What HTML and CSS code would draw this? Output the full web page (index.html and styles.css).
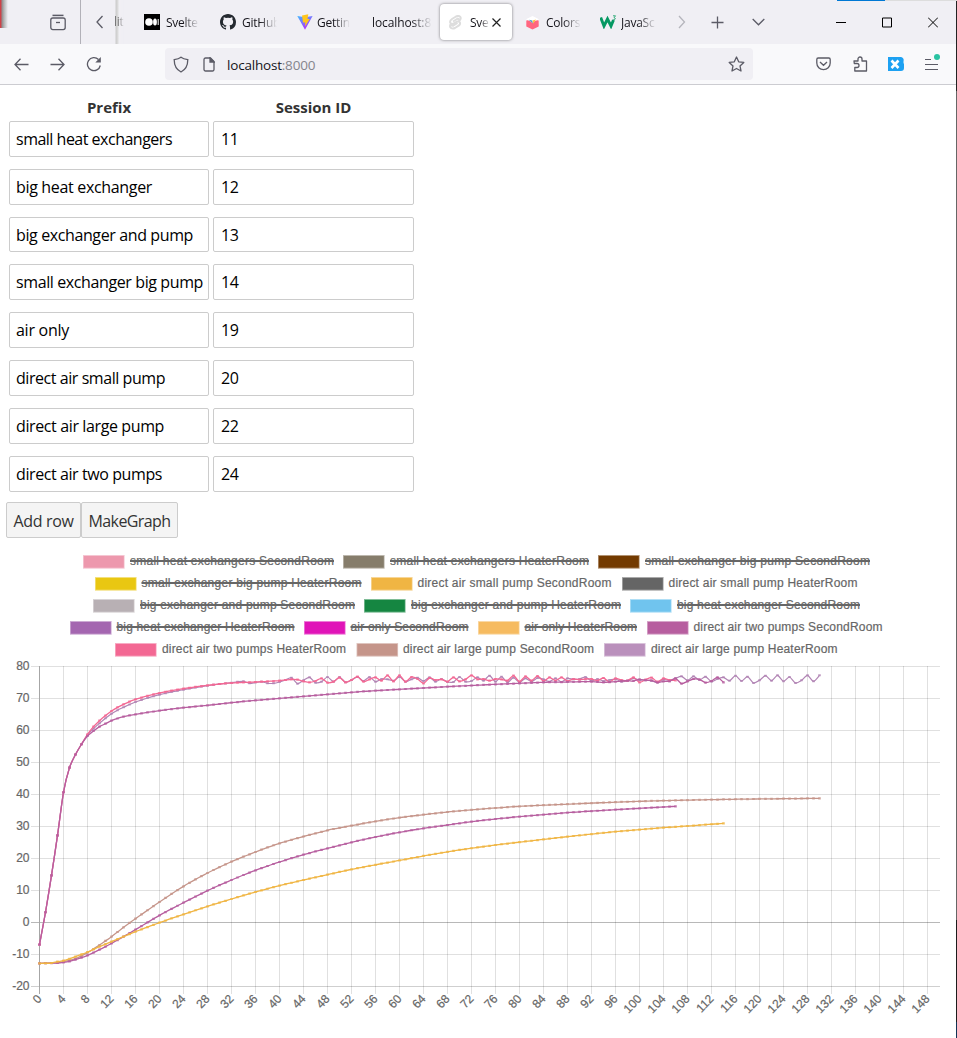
FILE: index.html
```html
<!DOCTYPE html>
<html lang="en">
<head>
<meta charset="utf-8">
<title>Svelte app</title>
<link rel="stylesheet" href="styles.css">
</head>
<body>
<div class="window">
  <header class="tabs">
    <div class="sliver"></div>
    <svg class="ic" width="16" height="17" viewBox="0 0 16 17"><path d="M2.500 1.400h11" stroke-width="1.500"/><rect x=".8" y="4" width="14.4" height="11.6" rx="2"/><path d="M6 8.500h4"/></svg>
    <div class="divider"></div>
    <svg class="ic" width="8" height="14" viewBox="0 0 8 14"><path d="M6.500 1L1 7l5.500 6"/></svg>
    <div class="partial fade">lit</div>
    <svg width="16" height="16" viewBox="0 0 16 16"><path d="M0 0h16v16H0z"/><circle cx="5" cy="8" r="3.800" fill="#fff"/><ellipse cx="11" cy="8" rx="1.900" ry="3.600" fill="#fff"/><path d="M14.200 5v6" stroke="#fff"/></svg>
    <div class="label fade w32">Svelte</div>
    <svg width="16" height="16" viewBox="0 0 16 16"><path fill="#24292f" d="M8 0C3.580 0 0 3.580 0 8c0 3.540 2.290 6.530 5.470 7.590.4.070.55-.17.55-.38v-1.500c-2.010.37-2.530-.49-2.690-.94-.09-.23-.48-.94-.82-1.130-.28-.15-.68-.52-.01-.53.63-.01 1.080.58 1.230.82.72 1.210 1.870.87 2.330.66.07-.52.28-.87.51-1.070-1.780-.2-3.640-.89-3.640-3.950 0-.87.31-1.590.82-2.150-.08-.2-.36-1.020.08-2.120 0 0 .67-.21 2.200.82a7.400 7.400 0 0 1 4 0c1.530-1.040 2.200-.82 2.200-.82.44 1.100.16 1.920.08 2.120.51.56.82 1.270.82 2.150 0 3.070-1.870 3.750-3.650 3.950.29.25.54.73.54 1.480v2.200c0 .21.15.46.55.38A8 8 0 0 0 16 8c0-4.420-3.580-8-8-8z"/></svg>
    <div class="label fade w34">GitHub</div>
    <svg width="16" height="16" viewBox="0 0 16 16"><defs><linearGradient id="v" x1="0" y1="0" x2=".6" y2="1"><stop stop-color="#41b8ff"/><stop offset="1" stop-color="#b72cfe"/></linearGradient></defs><path fill="url(#v)" d="M.3 2L8 3.200 15.600 2 8 15.700z"/><path fill="#ffc61c" d="M5 1.500L11.300.3 10.500 5h2.200L8 12.500l.3-4H6z"/></svg>
    <div class="label fade w32">Gettin</div>
    <div class="label fade w56">localhost:8</div>
    <div class="active">
      <svg width="13" height="15" viewBox="0 0 13 15" fill="none" stroke="#ddd" stroke-width="2"><path d="M4 6.500l4-2.500c2-1 1.500 1.500 3 1 2-3-1-5-4-3.500L3 4C-.5 6.500 1.500 9.500 4 8.800l4-2.200c3-1 4 2 2 3.800L6 13c-3 1.500-6-.5-4.500-3.500 1.500-.5 1 2 3 1l4-2.500"/></svg>
      <div class="label fade w18">Sve</div>
      <svg class="close" width="9" height="9" viewBox="0 0 9 9"><path d="M.5.5l8 8M8.500.5l-8 8" stroke="#222" stroke-width="1.200"/></svg>
    </div>
    <svg width="13" height="15" viewBox="0 0 13 15"><path fill="#fff" d="M6.500 1l6 3v5h-12V4z"/><path fill="#ff6680" d="M.3 5.500q3-1 6.200 2.500 3-3.500 6.200-2.500v6L6.500 14.600.3 11.500z"/><path fill="#38a0d8" d="M2.800 4.800l3.400.7.8 3z"/><path fill="#ffc43d" d="M6.500 5.500l3.500-1-3 4.200z"/></svg>
    <div class="label fade w34">Colors</div>
    <svg width="17" height="14" viewBox="0 0 17 14"><path d="M.7 2.500L4 11l3.500-7L11 11l2.500-6" fill="none" stroke="#059862" stroke-width="2.900"/><path d="M13 .8h2.500l-1.500 2c2 0 2 2-.8 2" fill="none" stroke="#30aa78"/></svg>
    <div class="label fade w34">JavaSc</div>
    <svg class="ic pale" width="8" height="14" viewBox="0 0 8 14"><path d="M1 1l5.500 6L1 13"/></svg>
    <svg class="ic" width="13" height="13" viewBox="0 0 13 13"><path d="M6.500 .5v12M.5 6.500h12"/></svg>
    <svg class="ic" width="13" height="8" viewBox="0 0 13 8"><path d="M.7 1l5.800 5.800L12.300 1"/></svg>
    <svg width="10" height="11"><path d="M0 5.500h10" stroke="#000"/></svg>
    <svg width="10" height="11"><path d="M.5 1h9v9h-9z" fill="none" stroke="#000"/></svg>
    <svg width="10" height="11"><path d="M0 .5l10 10M10 .5l-10 10" stroke="#000"/></svg>
    <div class="topline"></div>
  </header>

  <nav class="toolbar">
    <svg class="ic" width="15" height="13" viewBox="0 0 15 13"><path d="M14.500 6.500H1M6.500 .8L1 6.500l5.500 5.700"/></svg>
    <svg class="ic" width="15" height="13" viewBox="0 0 15 13"><path d="M.5 6.500H14M8.500 .8L14 6.500l-5.500 5.700"/></svg>
    <svg class="ic" width="16" height="16" viewBox="0 0 16 16"><path d="M14.300 9.500A6.500 6.500 0 1 1 12.500 3.500"/><path d="M14.800 1v5.500H9.300z" fill="#5b5b66" stroke="none"/></svg>
    <div class="urlbar">
      <svg class="ic" width="16" height="17" viewBox="0 0 16 17"><path d="M8 1.200C6 2.800 3.500 3.300 1.200 3.600c0 6 1.300 9.800 6.800 12.400 5.500-2.600 6.800-6.400 6.800-12.400C12.500 3.300 10 2.800 8 1.200z"/></svg>
      <svg class="ic" width="12" height="15" viewBox="0 0 12 15"><path d="M2.500 1h5L11 4.500v8A1.500 1.500 0 0 1 9.500 14h-7A1.500 1.500 0 0 1 1 12.500v-10A1.500 1.500 0 0 1 2.500 1z"/><path d="M7 1l4 4H7z" fill="#5b5b66"/></svg>
      <div class="url">localhost<span>:8000</span></div>
      <svg class="ic" width="17" height="16" viewBox="0 0 17 16"><path stroke-linejoin="round" d="M8.500 1l2.200 4.800 5.100.6-3.800 3.500 1 5.100-4.500-2.500L4 15l1-5.100L1.200 6.400l5.100-.6z"/></svg>
    </div>
    <svg class="ic" width="15" height="14" viewBox="0 0 15 14"><path d="M2.200 1h10.600A1.500 1.500 0 0 1 14.200 2.500V6A6.700 6.700 0 0 1 .8 6V2.500A1.500 1.500 0 0 1 2.200 1zM4 5l3.500 3.300L11 5"/></svg>
    <svg class="ic" width="15" height="16" viewBox="0 0 15 16"><path stroke-linejoin="round" d="M1 5h4V3a2 2 0 0 1 4 0v2h4.500v10H1.800v-3.500H4a2 2 0 0 0 0-4H1.300z"/></svg>
    <svg width="16" height="14" viewBox="0 0 16 14"><path fill="#1da1f2" d="M0 0h13a3 3 0 0 1 2.500 4v2l.5 1v4a3 3 0 0 1-3 3H0z"/><path d="M3.500 3.500l7 7.500M10.500 3.500l-7 7.500" stroke="#fff" stroke-width="2.600"/></svg>
    <div class="menu"><i></i><i></i><i></i></div>
  </nav>

  <main>
    <div class="form" id="form"><b>Prefix</b><b>Session ID</b></div>
    <div class="buttons"><button><span>Add row</span></button><button><span>MakeGraph</span></button></div>
    <svg class="chart" id="chart" width="956" height="492" viewBox="0 546 956 492"></svg>
  </main>
  <div class="edge"></div>
</div>
<script src="chart.js"></script>
</body>
</html>
```
FILE: styles.css
```css
* { box-sizing: border-box; }
body { margin: 0; background: #fff; font-family: "Open Sans", "Noto Sans", sans-serif; }
.window { position: relative; width: 957px; height: 1038px; overflow: hidden; }
.tabs {
  position: relative; height: 44px; background: #f0eff4; display: grid; align-items: center;
  grid-template-columns: 50px 30px 16px 18px 30px 22px 54px 22px 55px 20px 55px 68px 86px 20px 54px 21px 57px 33px 41px 84px 46px 46px 29px;
}
.tabs svg { display: block; }
.tabs .sliver { width: 8px; height: 28px; align-self: start; background: linear-gradient(90deg, #d43b43 0, #c9474d 1px, #8f8f8f 2px, #b5b5b5 4px, #f0eff4 8px); }
.divider { width: 1px; height: 44px; background: #b2b1b8; }
.ic { fill: none; stroke: #5b5b66; stroke-width: 1.3; }
.pale { stroke: #b5b5bc; }
.label, .partial { font-size: 12px; letter-spacing: -.25px; color: #15141a; white-space: nowrap; line-height: 20px; padding-top: 1px; }
.fade { -webkit-mask-image: linear-gradient(90deg, #000 50%, transparent); mask-image: linear-gradient(90deg, #000 50%, transparent); }
.partial { width: 10px; height: 44px; padding-top: 12px; color: #777; background: linear-gradient(90deg, #f0eff4 1px, #ccc 2px, #ddd 4px, #f0eff4 5px); }
.w18 { width: 20px; } .w32 { width: 33px; } .w34 { width: 35px; } .w56 { width: 60px; letter-spacing: -.1px; }
.w56.fade { -webkit-mask-image: linear-gradient(90deg, #000 65%, transparent); mask-image: linear-gradient(90deg, #000 65%, transparent); }
.active { width: 72px; height: 36px; display: flex; align-items: center; padding-left: 9px; background: #fff; border-radius: 4px; box-shadow: 0 0 3px rgba(0,0,0,.5); }
.active .label { margin-left: 8px; }
.active .close { margin-left: 2px; }
.topline { position: absolute; left: 837px; right: 0; top: 0; height: 1px; background: linear-gradient(90deg, #0078d4 48px, #ddd 48px); }
.toolbar {
  height: 41px; background: #f9f9fb; border-bottom: 1px solid #ccccd1; display: grid; align-items: center;
  grid-template-columns: 36px 36px 79px 651px 37px 35px 37px 31px; padding-left: 14px;
}
.toolbar > svg { display: block; }
.urlbar { width: 588px; height: 32px; display: flex; align-items: center; background: #f0eff4; border-radius: 4px; padding: 0 8px; }
.urlbar svg:nth-child(2) { margin: 0 12px 0 14px; }
.url { flex: 1; font-size: 13.5px; letter-spacing: -.2px; color: #15141a; padding-top: 1px; }
.url span { color: #85858c; }
.menu { position: relative; width: 13px; display: grid; gap: 4px; }
.menu i { height: 1px; background: #5b5b66; }
.menu i:first-child { width: 6px; }
.menu::after { content: ""; position: absolute; right: -2px; top: -5px; width: 6px; height: 6px; border-radius: 50%; background: #2ac3a2; }
.form { display: grid; grid-template-columns: 200px 201px; column-gap: 4px; row-gap: 12px; padding: 12px 0 0 9px; }
.form b { height: 24px; margin-bottom: -12px; line-height: 21px; text-align: center; font-size: 15px; color: #333; }
.field { height: 35.83px; border: 1px solid #ccc; border-radius: 2px; padding: 0 6px; line-height: 35px; font-size: 16px; color: #000; white-space: nowrap; }
.field:nth-child(even) { padding-left: 7px; }
.buttons { display: flex; margin: 10px 0 0 6px; }
.buttons button { height: 36px; padding: 2px 0 0; width: 75px; font: 16px "Open Sans", sans-serif; color: #333; background: #f4f4f4; border: 1px solid #ccc; border-radius: 2px; }
.buttons button + button { width: 97px; }
.chart { display: block; margin-top: 8px; font: 12px "Liberation Sans", Arial, sans-serif; }
.chart text { fill: #666; stroke: #666; stroke-width: .2px; }
.edge { position: absolute; right: 0; top: 1px; width: 1px; bottom: 0; background: linear-gradient(#222 90px, #666 90px, #666 919px, #1c1c1c 919px, #1c1c1c 1021px, #123456 1021px); }
```
FILE: chart.js
```js
const NS = 'http://www.w3.org/2000/svg';
const chart = document.getElementById('chart');
function add(tag, attrs, text) {
  const e = document.createElementNS(NS, tag);
  for (const k in attrs) e.setAttribute(k, attrs[k]);
  if (text !== undefined) e.textContent = text;
  chart.appendChild(e);
}

// Session rows: prefix, id, width of the prefix text
const rows = [['small heat exchangers', 11, 156], ['big heat exchanger', 12, 136], ['big exchanger and pump', 13, 177],
  ['small exchanger big pump', 14, 187], ['air only', 19, 53], ['direct air small pump', 20, 149],
  ['direct air large pump', 22, 148], ['direct air two pumps', 24, 146]];

// Tighten or loosen tracking so that a label fills the given width
function fit(el, width) {
  const r = document.createRange();
  r.selectNodeContents(el);
  const w = r.getBoundingClientRect().width;
  el.style.letterSpacing = ((width - w) / el.textContent.length).toFixed(3) + 'px';
}
const form = document.getElementById('form');
for (const [name, id, w] of rows) {
  for (const t of [name, id]) {
    const d = document.createElement('div');
    d.className = 'field';
    d.textContent = t;
    form.appendChild(d);
    fit(d, t === name ? w : 17.5);
  }
}
document.querySelectorAll('.buttons span').forEach((s, i) => fit(s, [60, 82][i]));

// Legend entries: box x, text x, text end, colour, hidden, label
const legend = [
  [[83,130,334,'#ed98ad',1,'small heat exchangers SecondRoom'],[343,390,589,'#867d6b',1,'small heat exchangers HeaterRoom'],[598,645,870,'#733a00',1,'small exchanger big pump SecondRoom']],
  [[95,141.5,361.5,'#e9c712',1,'small exchanger big pump HeaterRoom'],[371,417.5,611.5,'#f0b543',0,'direct air small pump SecondRoom'],[622,668.5,857.5,'#656565',0,'direct air small pump HeaterRoom']],
  [[93,140,355,'#b8b0b4',1,'big exchanger and pump SecondRoom'],[364,411,621,'#158641',1,'big exchanger and pump HeaterRoom'],[630,677,860,'#70c4ee',1,'big heat exchanger SecondRoom']],
  [[70,116.5,294.5,'#a466b0',1,'big heat exchanger HeaterRoom'],[304,350.5,468.5,'#e014b8',1,'air only SecondRoom'],[478,524.5,637,'#f6bb60',1,'air only HeaterRoom'],[647,693.5,882.5,'#b75e9f',0,'direct air two pumps SecondRoom']],
  [[115,162,346,'#f36893',0,'direct air two pumps HeaterRoom'],[356.5,403,594,'#c5958a',0,'direct air large pump SecondRoom'],[604,651,837.5,'#ba90bc',0,'direct air large pump HeaterRoom']]
];
legend.forEach((line, r) => line.forEach(([bx, tx, te, color, off, label]) => {
  const y = 555 + 22 * r;
  add('rect', {x: bx, y, width: 41.6, height: 13.7, fill: color, opacity: .55});
  add('rect', {x: bx + .8, y: y + 1, width: 40, height: 11.7, fill: color});
  add('text', {x: tx, y: y + 10, textLength: te - tx}, label);
  if (off) add('path', {d: `M${tx} ${y + 6}H${te}`, stroke: '#666', 'stroke-width': 1.9});
}));

const X = i => 39.5 + 6 * i, Y = v => 922.5 - 3.2 * v;
for (let v = -20; v <= 80; v += 10) {
  add('path', {d: `M31 ${Y(v)}H940`, stroke: v === 0 ? '#b8b8b8' : v === -20 ? '#cfcfcf' : '#000', 'stroke-opacity': v === 0 || v === -20 ? 1 : .12});
  add('text', {x: 29.500, y: Y(v) + 3.5, 'text-anchor': 'end'}, v);
}
for (let i = 0; i < 150; i += 4) {
  add('path', {d: `M${X(i)} 666V994`, stroke: i ? '#000' : '#aaa', 'stroke-opacity': i ? .12 : 1});
  add('text', {x: X(i) + 3, y: 999.500, 'text-anchor': 'end', transform: `rotate(-46 ${X(i) + 3} 999.5)`}, i);
}
add('path', {d: 'M39.5 666V987', stroke: '#a6a6a6'});

// Smooth interpolation over irregularly spaced knots
function sample(k) {
  const out = [], n = k.length;
  const m = k.map((p, j) => {
    const a = k[Math.max(0, j - 1)], b = k[Math.min(n - 1, j + 1)];
    return (b[1] - a[1]) / (b[0] - a[0]);
  });
  for (let j = 0; j < n - 1; j++) {
    const [x0, y0] = k[j], [x1, y1] = k[j + 1], h = x1 - x0;
    for (let x = x0; x < x1; x++) {
      const t = (x - x0) / h, t2 = t * t, t3 = t2 * t;
      out.push([x, (2*t3-3*t2+1)*y0 + (t3-2*t2+t)*h*m[j] + (3*t2-2*t3)*y1 + (t3-t2)*h*m[j+1]]);
    }
  }
  out.push(k[n - 1]);
  return out;
}
function line(knots, color, width, dot) {
  const pts = sample(knots).map(([i, v]) => [X(i), Y(v)]);
  let d = `M${pts[0]}`;
  for (let j = 1; j < pts.length; j++) {
    const p0 = pts[Math.max(0, j - 2)], p1 = pts[j - 1], p2 = pts[j], p3 = pts[Math.min(pts.length - 1, j + 1)];
    const s = 8;
    d += `C${p1[0] + (p2[0]-p0[0])/s} ${p1[1] + (p2[1]-p0[1])/s} ${p2[0] - (p3[0]-p1[0])/s} ${p2[1] - (p3[1]-p1[1])/s} ${p2[0]} ${p2[1]}`;
  }
  add('path', {d, fill: 'none', stroke: color, 'stroke-width': width});
  add('path', {d: pts.map(p => `M${p[0] - 1.3} ${p[1]}h2.6`).join(''), stroke: color, 'stroke-width': dot, 'stroke-opacity': .8});
}
const up = y => 80 - (y - 34.5) / 9.6;
const low = y => (247.5 - y) / 9.6;
const pairs = (a, f) => { const r = []; for (let j = 0; j < a.length; j += 2) r.push([a[j], f(a[j + 1])]); return r; };
const run = (start, a) => a.map((y, j) => [start + j, up(y)]);
const rise = [[0,-6.9],[1,3.2],[2,14.7],[3,27.2],[4,40.7],[5,48.4],[6,52.5],[7,55.7]];

line(rise.concat(pairs([8,240,9,221,10,205,12,176,14,157,16,141,20,119,24,104,28,92,32,83,34,79,35,85,37,80,38,85,39,85,40,81,41,75], up),
  run(42, [68,86,76,67,83,80,66,80,66,82,75,66,78,66,80,72,73,77,66,80,73,68,78,67,80,72,81,81,66,80,78,67,77,62,80,65,82,68,82,70,80,69,73,80,70,81,70,73,72,66,78,72,78,75,72,80,78,70,75,75,78,82,73,77,70,64,76,64,75,65,80,72,67,77,62,78,65,84,76,62,77,61,79,66,84,76,61,79,61])), '#b184b4', 1.2, 2);
line(pairs([0,370,3,368,4,365,6,356,8,338,9,327,10,315,12,290,14,262,16,236,20,186,24,139,28,99,32,65,36,36,40,10], low)
  .concat(pairs([48,526,52,512,56,499,60,488,64,479,68,471,72,464.5,76,459,80,454,88,447.5,96,441.5,100,439,104,437,115,433,130,430], up)), '#c5958a', 1.3, 2.2);
line(rise.concat(pairs([8,238,9,215,10,197,12,168,14,148,16,133,20,114,24,101,28,91,32,84,36,81,40,77,41,75], up),
  run(42, [73,74,79,82,78,70,83,80,68,82,75,65,80,73,67,77,61,79,61,80,66,72,85,69,75,73,80,67,79,73,61,73,72,77,72,73,77,62,80,64,77,63,78,67,77,67,78,72,74,72,72,77,69,81,70,75,77,67,82,74,68,80,70,75,76])), '#f36893', 1.3, 2.2);
line(pairs([0,370,3,369,4,367,5,364,6,359,7,353,8,346,10,329,12,310,14,290,16,269,20,226,24,188,28,152,32,120,36,91,40,66,44,44], low)
  .concat(pairs([52,562,56,546,60,532,64,520,68,510,72,500,76,492,80,485,88,473,96,464,100,460,106,454], up)), '#b75e9f', 1.3, 2.2);
line(rise.concat(pairs([8,243,9,228,10,215,11,206,12,197,14,185,16,178,20,167,24,158,28,151,32,143,36,136,40,130,44,124,48,118,52,112,56,107,60,103,64,99,68,95,72,91.5,76,88,80,85,84,82,88,81,92,80,94,82,96,80,98,77], up),
  run(99, [78,73,76,76,83,79,79,70,86,79,72,73,83,78,67,82])), '#b75e9f', 1.3, 2.2);
line(pairs([0,370,2,369,3,365,4,362,6,350,8,336,10,320,12,305,14,290,16,275,20,248,24,223,28,199,32,177,36,156,40,137,44,120,47,108], low)
  .concat([[52,16.6],[60,19.4],[68,22.1]], pairs([76,570,80,561.5,88,545,96,530,100,524,104,518,108,513,114,505], up)), '#f0b543', 1.3, 2.2);
```
